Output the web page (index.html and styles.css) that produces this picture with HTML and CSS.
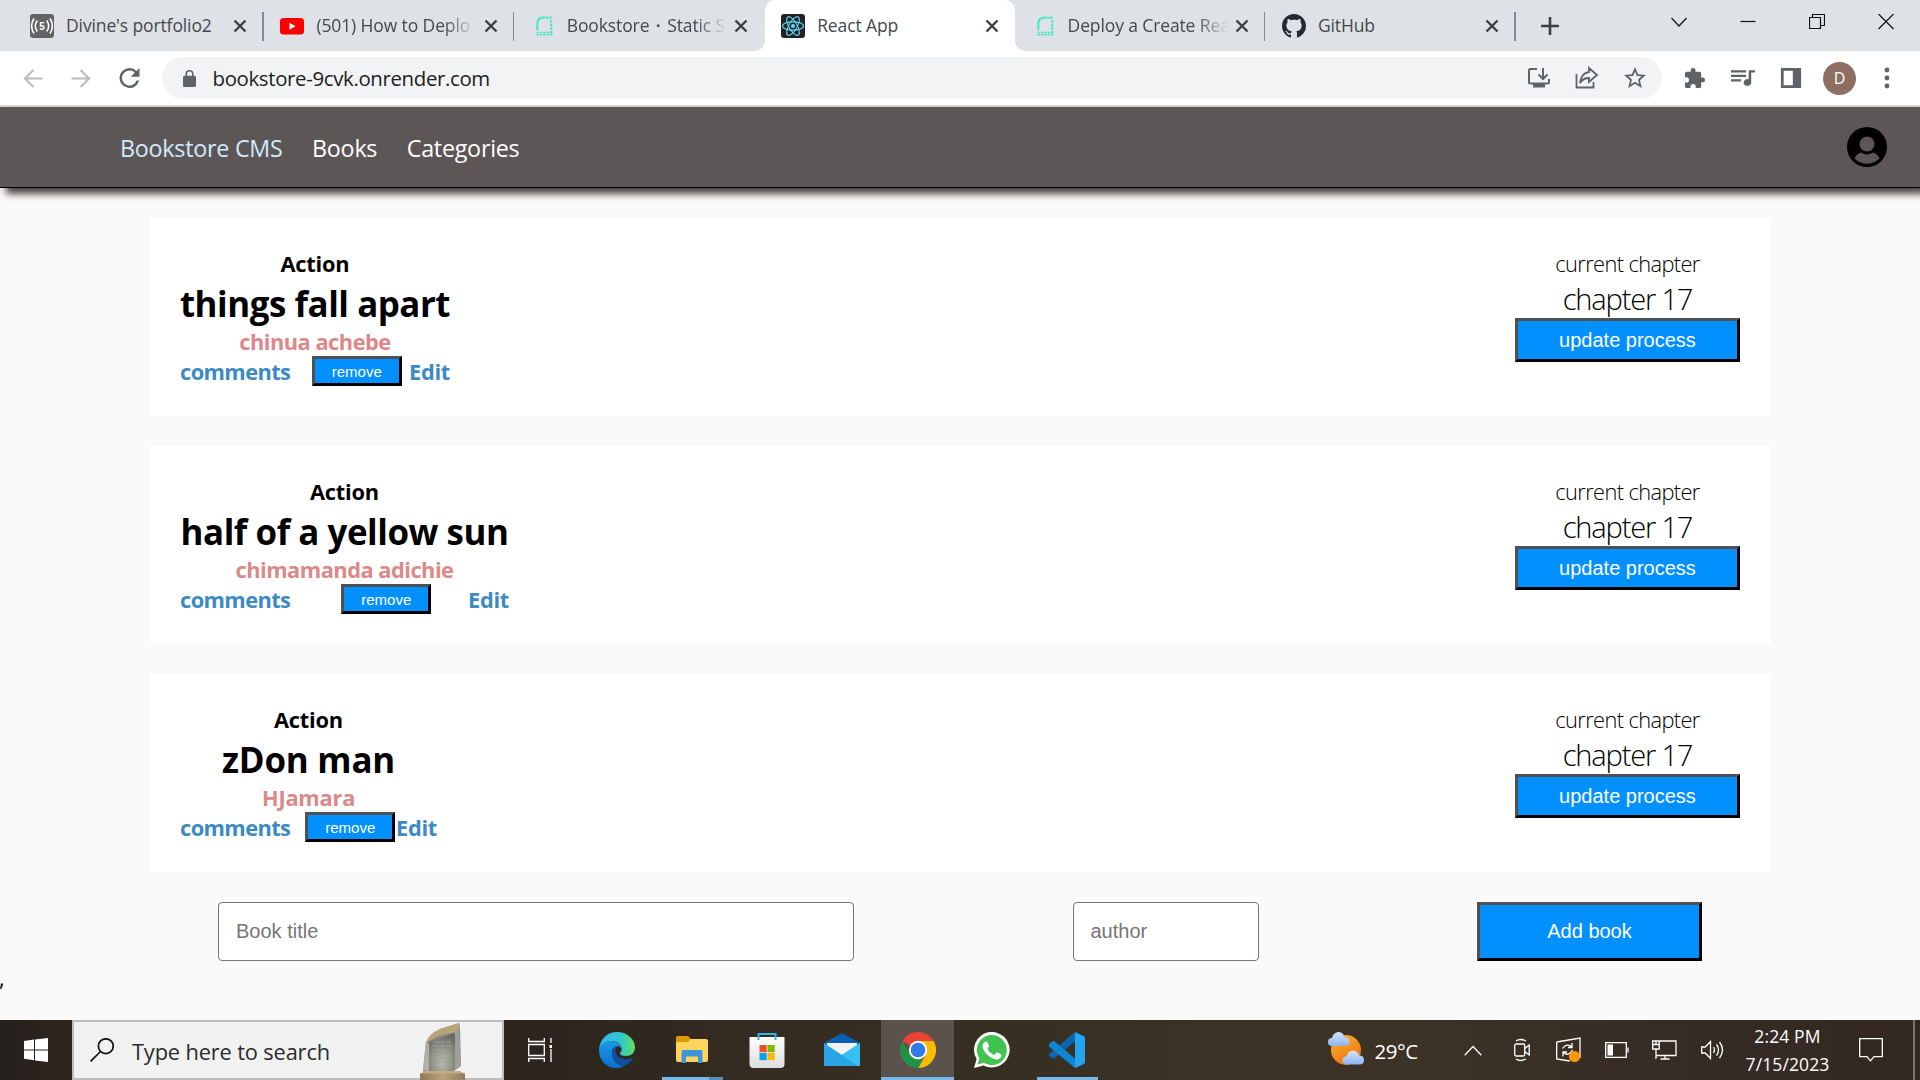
FILE: index.html
```
<!DOCTYPE html>
<html lang="en">
<head>
<meta charset="utf-8">
<title>React App</title>
<link rel="stylesheet" href="styles.css">
</head>
<body>
<svg class="defs" width="0" height="0" aria-hidden="true">
  <symbol id="x" viewBox="0 0 14 14"><path d="M1.500 1.500l11 11M12.500 1.500l-11 11" stroke="#3c4043" stroke-width="2.400" fill="none"/></symbol>
  <symbol id="render" viewBox="0 0 20 24"><path d="M2 17V9Q2 2 9 2h2" fill="none" stroke="#4be8bd" stroke-width="2.600"/><path d="M12 2h8" stroke="#4be8bd" stroke-width="2.600" stroke-dasharray="3 1"/><path d="M18.600 5v17" stroke="#4be8bd" stroke-width="2.600" stroke-dasharray="3 1.300"/><path d="M.8 19.800H20M.8 22.400H20" stroke="#4be8bd" stroke-width="1.900" stroke-dasharray="3 1.100"/></symbol>
</svg>

<div class="tabs">
  <div class="tab">
    <svg class="fav" viewBox="0 0 24 24"><rect width="24" height="24" rx="3" fill="#636363"/><g fill="none" stroke="#fff" stroke-width="1.600"><path d="M4 4.500Q-.8 12 4 19.500M7.300 6.500Q3.300 12 7.300 17.500M20 4.500Q24.800 12 20 19.500M16.700 6.500Q20.700 12 16.700 17.500"/></g><text x="12" y="15.500" text-anchor="middle" class="five">5</text></svg>
    <span class="tab-title">Divine's portfolio2</span><svg class="close"><use href="#x"/></svg>
  </div>
  <div class="tab">
    <svg class="fav" viewBox="0 0 24 24"><rect y="4" width="24" height="16.500" rx="3.500" fill="#f00"/><path d="M9.500 8.700v7l6-3.500z" fill="#fff"/></svg>
    <span class="tab-title fade">(501) How to Deplo</span><svg class="close"><use href="#x"/></svg>
  </div>
  <div class="tab no-sep">
    <svg class="fav render"><use href="#render"/></svg>
    <span class="tab-title fade">Bookstore・Static S</span><svg class="close"><use href="#x"/></svg>
  </div>
  <div class="tab active">
    <svg class="fav" viewBox="0 0 24 24"><rect width="24" height="24" rx="3" fill="#222"/><g fill="none" stroke="#61dafb" stroke-width="1.100"><ellipse cx="12" cy="12" rx="10.500" ry="4.100"/><ellipse cx="12" cy="12" rx="10.500" ry="4.100" transform="rotate(60 12 12)"/><ellipse cx="12" cy="12" rx="10.500" ry="4.100" transform="rotate(120 12 12)"/></g><circle cx="12" cy="12" r="2.100" fill="#61dafb"/></svg>
    <span class="tab-title">React App</span><svg class="close"><use href="#x"/></svg>
  </div>
  <div class="tab">
    <svg class="fav render"><use href="#render"/></svg>
    <span class="tab-title fade">Deploy a Create Rea</span><svg class="close"><use href="#x"/></svg>
  </div>
  <div class="tab">
    <svg class="fav" viewBox="0 0 16 16"><path fill="#24292f" d="M8 0C3.580 0 0 3.580 0 8c0 3.540 2.290 6.530 5.470 7.590.4.070.55-.17.55-.38 0-.19-.01-.82-.01-1.490-2.010.37-2.530-.49-2.690-.94-.09-.23-.48-.94-.82-1.130-.28-.15-.68-.52-.01-.53.63-.01 1.080.58 1.230.82.72 1.210 1.870.87 2.330.66.07-.52.28-.87.51-1.070-1.780-.2-3.640-.89-3.640-3.950 0-.87.31-1.590.82-2.150-.08-.2-.36-1.020.08-2.120 0 0 .67-.21 2.200.82.64-.18 1.320-.27 2-.27s1.360.09 2 .27c1.530-1.040 2.200-.82 2.200-.82.44 1.100.16 1.920.08 2.120.51.56.82 1.270.82 2.150 0 3.070-1.870 3.750-3.650 3.950.29.25.54.73.54 1.480 0 1.070-.01 1.930-.01 2.200 0 .21.15.46.55.38A8.010 8.010 0 0 0 16 8c0-4.420-3.580-8-8-8z"/></svg>
    <span class="tab-title">GitHub</span><svg class="close"><use href="#x"/></svg>
  </div>
  <svg class="new-tab" viewBox="0 0 18 18"><path d="M9 0v18M0 9h18" stroke="#3c4043" stroke-width="2.600"/></svg>
  <div class="window-controls">
    <svg viewBox="0 0 16 16"><path d="M.5 4l7.500 8 7.500-8"/></svg>
    <svg viewBox="0 0 16 16"><path d="M.5 7.500h15"/></svg>
    <svg viewBox="0 0 16 16"><path d="M.5 3.500h11v11h-11zM3.500 3.500v-3h12v11h-4"/></svg>
    <svg viewBox="0 0 16 16"><path d="M.5 0l15 15M15.500 0l-15 15"/></svg>
  </div>
</div>

<div class="toolbar">
  <svg class="back" viewBox="0 0 20 20"><path d="M20 10H2M10.500 1L1.500 10l9 9" fill="none" stroke="#b9bbbe" stroke-width="2.200"/></svg>
  <svg class="forward" viewBox="0 0 20 20"><path d="M0 10h18M9.500 1l9 9-9 9" fill="none" stroke="#b9bbbe" stroke-width="2.200"/></svg>
  <svg class="reload" viewBox="4 4 16 16"><path fill="#5f6368" d="M17.650 6.350A7.960 7.960 0 0 0 12 4a8 8 0 1 0 7.730 10h-2.080A6 6 0 1 1 12 6c1.660 0 3.140.69 4.220 1.780L13 11h7V4z"/></svg>
  <div class="omnibox">
    <svg class="lock" viewBox="4 1 16 21"><path fill="#5f6368" d="M18 8h-1V6A5 5 0 0 0 7 6v2H6a2 2 0 0 0-2 2v10c0 1.100.9 2 2 2h12a2 2 0 0 0 2-2V10a2 2 0 0 0-2-2zM8.900 6a3.100 3.100 0 0 1 6.200 0v2H8.900z"/></svg>
    <span class="url">bookstore-9cvk.onrender.com</span>
    <svg class="omni-icon" viewBox="0 0 24 24"><path d="M10 3H3.500Q2 3 2 4.500V16q0 1.500 1.500 1.500h17Q22 17.500 22 16v-3M16 2v11M11.500 8.500L16 13l4.500-4.500" fill="none" stroke="#5f6368" stroke-width="2"/><path d="M6 18h12v3.500H6z" fill="#5f6368"/></svg>
    <svg class="omni-icon" viewBox="0 0 24 24"><path d="M1.500 8v13.500h17V16M14 6V2l8 7-8 7v-4Q8 12 5 17 6 7 14 6z" fill="none" stroke="#5f6368" stroke-width="1.800"/></svg>
    <svg class="omni-icon star" viewBox="2 2 20 20"><path fill="#5f6368" d="M22 9.240l-7.190-.62L12 2 9.190 8.630 2 9.240l5.460 4.730L5.820 21 12 17.270 18.180 21l-1.630-7.030L22 9.240zM12 15.400l-3.760 2.270 1-4.280-3.320-2.880 4.380-.38L12 6.100l1.710 4.040 4.380.38-3.320 2.880 1 4.280L12 15.400z"/></svg>
  </div>
  <div class="actions">
    <svg viewBox="1 0 23 23"><path fill="#5f6368" d="M20.500 11H19V7a2 2 0 0 0-2-2h-4V3.500a2.500 2.500 0 0 0-5 0V5H4a2 2 0 0 0-2 2v3.800h1.500a2.700 2.700 0 0 1 0 5.400H2V20c0 1.100.9 2 2 2h3.800v-1.500a2.700 2.700 0 0 1 5.400 0V22H17a2 2 0 0 0 2-2v-4h1.500a2.500 2.500 0 0 0 0-5z"/></svg>
    <svg class="queue" viewBox="3 5 19 16" preserveAspectRatio="none"><path fill="#5f6368" d="M15 6H3v2h12V6zm0 4H3v2h12v-2zM3 16h8v-2H3v2zM17 6v8.180A3 3 0 1 0 19 17V8h3V6h-5z"/></svg>
    <svg viewBox="0 0 24 24"><path fill="#5f6368" fill-rule="evenodd" d="M1 1h22v22H1zM4 4v16h10V4z"/></svg>
    <span class="avatar">D</span>
    <svg class="dots" viewBox="0 0 6 22"><g fill="#5f6368"><circle cx="3" cy="3" r="2.400"/><circle cx="3" cy="11" r="2.400"/><circle cx="3" cy="19" r="2.400"/></g></svg>
  </div>
</div>

<header class="site-header">
  <nav><a class="brand">Bookstore CMS</a><a>Books</a><a>Categories</a></nav>
  <svg class="user" viewBox="0 0 40 40"><defs><clipPath id="uc"><circle cx="20" cy="20" r="16.800"/></clipPath></defs><circle cx="20" cy="20" r="20"/><circle cx="20" cy="17" r="7.500" fill="#5c5656"/><path clip-path="url(#uc)" d="M6 35Q8 27 14 25.500 20 29.500 26 25.500 32 27 34 35V40H6z" fill="#5c5656"/></svg>
</header>

<main>
  <section class="card">
    <div class="info w-things">
      <span class="genre">Action</span><h2>things fall apart</h2><span class="author">chinua achebe</span>
      <div class="links"><a class="c">comments</a><button class="remove">remove</button><a class="e">Edit</a></div>
    </div>
    <div class="progress"><span class="current">current chapter</span><span class="chapter">chapter 17</span><button class="update">update process</button></div>
  </section>
  <section class="card">
    <div class="info w-half">
      <span class="genre">Action</span><h2>half of a yellow sun</h2><span class="author">chimamanda adichie</span>
      <div class="links"><a class="c">comments</a><button class="remove">remove</button><a class="e">Edit</a></div>
    </div>
    <div class="progress"><span class="current">current chapter</span><span class="chapter">chapter 17</span><button class="update">update process</button></div>
  </section>
  <section class="card">
    <div class="info w-don">
      <span class="genre">Action</span><h2>zDon man</h2><span class="author">HJamara</span>
      <div class="links"><a class="c">comments</a><button class="remove">remove</button><a class="e">Edit</a></div>
    </div>
    <div class="progress"><span class="current">current chapter</span><span class="chapter">chapter 17</span><button class="update">update process</button></div>
  </section>
  <form>
    <input class="title-in" placeholder="Book title"><input class="author-in" placeholder="author"><button type="button" class="add">Add book</button>
  </form>
  <div class="stray">,</div>
</main>

<footer class="taskbar">
  <div class="start"><svg viewBox="0 0 24 24"><path fill="#fff" d="M0 3L10 1.500v9.900H0zM11 1.400L24 0v11.400H11zM0 12.400h10v9.900L0 20.800zM11 12.400h13V24l-13-1.600z"/></svg></div>
  <div class="search">
    <svg class="mag" viewBox="0 0 24 24"><circle cx="15.800" cy="8.200" r="7.400" fill="none" stroke="#111" stroke-width="1.700"/><path d="M10.500 13.500L.6 23.400" stroke="#111" stroke-width="1.700"/></svg>
    <span>Type here to search</span>
    <svg class="stone" viewBox="0 0 46 58">
      <defs><radialGradient id="sg" cx=".5" cy=".75" r=".75"><stop offset="0" stop-color="#b9bdb0"/><stop offset="1" stop-color="#686b62"/></radialGradient><linearGradient id="sb"><stop offset="0" stop-color="#8d7b5a"/><stop offset=".5" stop-color="#b6a27c"/><stop offset="1" stop-color="#8f7e5e"/></linearGradient></defs>
      <path d="M6 20L20 7 39 1l1 4 1 39-7 5-25 3-6-3z" fill="#8c8b85"/><path d="M9 20L34 11l1 3v32l-8 4H9z" fill="url(#sg)"/><path d="M6 21Q8 12 20 7L39 1l1 6-4 3-9 2-9 2-9 5z" fill="#b9a37a"/><path d="M35 10l4-5 2 39-6 4z" fill="#a09e99"/><path d="M3 47l3-27 3 2v29z" fill="#b0aea7"/>
      <path d="M13 20h18M12 24h20M12 28h18M12 32h20M12 36h19M13 40h17" stroke="#9da194" stroke-width="1" stroke-dasharray="7 1 4 2"/><path d="M4 49h36l5 3H0z" fill="#c6aa7d"/><path d="M0 51.500h45V58H0z" fill="url(#sb)"/>
    </svg>
  </div>
  <div class="apps">
    <div class="app tv"><svg viewBox="0 0 24 24" fill="none" stroke="#fff" stroke-width="1.300"><path d="M.7 0v3.500h15.600V0M.7 6.500h15.600v11H.7zM.7 24v-3.500h15.600V24M23 0v5M23 11v13"/><path d="M21.500 7h3v3h-3z" fill="#fff" stroke="none"/></svg></div>
    <div class="app"><svg viewBox="0 0 36 36"><defs><linearGradient id="e1"><stop offset="0" stop-color="#35b8f0"/><stop offset=".6" stop-color="#2dc7d0"/><stop offset="1" stop-color="#5fe35a"/></linearGradient><linearGradient id="e2" x2="0" y2="1"><stop offset="0" stop-color="#1a9be6"/><stop offset="1" stop-color="#0a6fd0"/></linearGradient></defs><path d="M0 18C1 7 8 0 18 0c11 0 18 8 18 15 0 6-4 9-9 9-4 0-6-1-6-2.500 0-1 2-2 1.500-5C22 11 17 9 12 9 6 9 2 13 0 18z" fill="url(#e1)"/><path d="M0 18c1-5 5-9 11-9 5 0 10 2 11.500 7-5-4-9.500 0-9.500 5 0 8 7 14 12 13-3 1.500-5 2-8 2C7 36 0 28 0 18z" fill="url(#e2)"/><path d="M17 14.500c-3 1-4 4-4 6.500 0 8 7 14 12 13 4-1.500 7-4 8.500-7 .3-.8-.4-1.200-1-.9C26 29 14 27 17 14.500z" fill="#0f4f9e"/></svg></div>
    <div class="app folder"><svg viewBox="0 0 32 27"><path d="M0 2Q0 0 2 0h10l3 3v4H0z" fill="#dd9a05"/><path d="M0 6h12l3-3h15q2 0 2 2v19q0 2-2 2H2q-2 0-2-2z" fill="#ffd45e"/><path d="M5.500 27V16q0-2 2-2h17q2 0 2 2v11H22v-6.500H10V27z" fill="#3c96dc"/></svg><i></i></div>
    <div class="app"><svg viewBox="0 0 36 36"><defs><linearGradient id="st" x2="0" y2="1"><stop offset="0" stop-color="#fff"/><stop offset="1" stop-color="#ddd"/></linearGradient></defs><path d="M.5 5h35v27q0 4-4 4h-27q-4 0-4-4z" fill="url(#st)"/><path d="M9.500 8V2h17v6" fill="none" stroke="#2fb3f0" stroke-width="2"/><path fill="#f25022" d="M10.500 13h7.200v7.200h-7.200z"/><path fill="#7fba00" d="M18.500 13h7.200v7.200h-7.200z"/><path fill="#00a4ef" d="M10.500 21h7.200v7.200h-7.200z"/><path fill="#ffb900" d="M18.500 21h7.200v7.200h-7.200z"/></svg></div>
    <div class="app"><svg viewBox="0 0 36 36"><path d="M0 11L18 1l18 10v4H0z" fill="#0a5fb4"/><path d="M3 11h30v4L18 24 3 15z" fill="#f3f3f3"/><path d="M0 11l18 12L36 11v23H0z" fill="#2aa5e8"/><path d="M36 11L18 23l16 11h2z" fill="#36c1f5"/></svg></div>
    <div class="app chrome on"><svg viewBox="0 0 36 36"><path d="M18 18L2.400 9A18 18 0 0 1 33.600 9z" fill="#ea4335"/><path d="M18 9h15.600A18 18 0 0 1 18 36l7.800-13.500z" fill="#fbbc04"/><path d="M2.400 9l7.800 13.500L18 27h5.200L18 36A18 18 0 0 1 2.400 9z" fill="#1f9345"/><circle cx="18" cy="18" r="9.200" fill="#fff"/><circle cx="18" cy="18" r="7.300" fill="#3279ea"/></svg></div>
    <div class="app"><svg viewBox="0 0 36 36"><path d="M0 36l2.600-9A17.800 17.800 0 1 1 9.500 33.500z" fill="#fff"/><path d="M3.600 32.400l1.800-6A15 15 0 1 1 10 30.800z" fill="#40c351"/><path d="M12.500 9.500c-1.500-.3-4 1.500-4 4.500 0 5 7 12.500 13.500 13.500 3 .3 5.500-2 5.500-4.500 0-.7-3.800-2.700-4.600-2.500-.9.300-1.600 2.400-2.400 2.400-2 0-7.200-5-7-6.200.1-.7 1.700-1.600 1.600-2.700-.1-.8-1.500-4.300-2.600-4.500z" fill="#fff"/></svg></div>
    <div class="app run"><svg viewBox="0 0 36 36"><path d="M26 0L34.500 4Q36 5 36 6v24q0 1.500-1.500 2.200L26 36z" fill="#25a5f0"/><path d="M26 0v9.500L4.500 27 0 24v-2z" fill="#0a66b0"/><path d="M3.500 9L0 12v2.500L26 36V26.500L5 9z" fill="#0c86d3"/></svg></div>
  </div>
  <div class="tray">
    <svg class="weather" viewBox="0 0 36 34"><defs><linearGradient id="w" x2=".5" y2="1"><stop offset="0" stop-color="#f9b52a"/><stop offset="1" stop-color="#f07413"/></linearGradient><linearGradient id="cl" x2="0" y2="1"><stop offset="0" stop-color="#d5e6fd"/><stop offset="1" stop-color="#8fb2ee"/></linearGradient></defs><circle cx="18" cy="18" r="15" fill="url(#w)"/><path id="cloud" d="M4 14a4 4 0 0 1 0-8q1-5 6-6 5 0 6.500 5 5 0 5 4.500T17 14z" fill="url(#cl)"/><use href="#cloud" x="14.500" y="18.500"/></svg>
    <span class="temp">29°C</span>
    <svg class="caret" viewBox="0 0 18 11"><path d="M.7 10.300L9 1.500l8.300 8.800"/></svg>
    <svg class="cam" viewBox="0 0 16 24"><rect x=".7" y="6" width="10" height="12" rx="1.500"/><path d="M10.700 10.500l4.500-3.500v10l-4.500-3.500M2 3q4-3 10 0M2 21q4 3 10 0"/></svg>
    <svg class="sync" viewBox="0 0 26 26"><path d="M.7 5L24 1v20M.7 5v17l13 2M6.500 11.500q4-6 9.500-1.500M16 6v4.500h-4M16.500 13q-4 7-9 2.500M7 19.500V15h4"/><circle cx="18.500" cy="19.500" r="5.600" fill="#ff9800" stroke="none"/></svg>
    <svg class="bat" viewBox="0 0 24 16"><path d="M.7.700h20.600v14.600H.7zM23 5.500v5"/><path d="M2.500 2.500h5.500v11H2.500z" fill="#fff" stroke="none"/></svg>
    <svg class="net" viewBox="0 0 25 20"><path d="M7.500 1h16.500v14.500H4M13 15.500V19M8.500 19h9M.7 1h6.500v8H.7zM.7 4.500h6.500M4 1v3.500M4 9v10"/></svg>
    <svg class="vol" viewBox="0 0 24 20"><path d="M.7 7h3.500L9.500 1.500v17L4.200 13H.7zM12.500 7q2 3 0 6M15.500 4.500q4 5.500 0 11M18.500 2q6 8 0 16"/></svg>
    <div class="clock"><span>2:24 PM</span><span>7/15/2023</span></div>
    <svg class="note" viewBox="0 0 24 24"><path d="M.7.700h22.600v18H15L11.500 22.800 8 18.700H.7z"/></svg>
    <i class="peek"></i>
  </div>
</footer>
</body>
</html>
```
FILE: styles.css
```
* { box-sizing: border-box; }
html, body { margin: 0; }
body { width: 1920px; height: 1080px; overflow: hidden; display: flex; flex-direction: column; background: #fafafa; font-family: "Open Sans", sans-serif; }
svg { display: block; flex: none; }
.defs { position: absolute; }

/* browser tabs */
.tabs { height: 51px; flex: none; display: flex; align-items: center; padding-left: 13.500px; background: #dee1e6; }
.tab { width: 250.400px; height: 51px; flex: none; display: flex; align-items: center; padding: 0 16.500px; position: relative; }
.tab::after { content: ""; position: absolute; right: 0; top: 12px; height: 29px; width: 1.500px; background: #868a90; }
.tab.no-sep::after, .tab.active::after { display: none; }
.tab.active { background: #fff; border-radius: 10px 10px 0 0; }
.tab.active::before { content: ""; position: absolute; left: -10px; right: -10px; bottom: 0; height: 10px; background: radial-gradient(circle at 0 0, transparent 9.500px, #fff 10px) left / 10px 10px no-repeat, radial-gradient(circle at 100% 0, transparent 9.500px, #fff 10px) right / 10px 10px no-repeat; }
.fav { width: 24px; height: 24px; }
.fav.render { width: 20px; height: 20px; margin: 0 2px 0 3px; }
.fav.render + .tab-title { margin-left: 11px; }
.five { font: bold 10px "Liberation Sans", sans-serif; fill: #fff; }
.tab-title { width: 160px; margin-left: 12px; font-size: 17.500px; letter-spacing: -.12px; line-height: 24px; padding-bottom: 1px; color: #45484c; white-space: nowrap; }
.tab-title.fade { -webkit-mask-image: linear-gradient(90deg, #000 128px, transparent 160px); mask-image: linear-gradient(90deg, #000 128px, transparent 160px); }
.close { width: 14px; height: 14px; margin-left: auto; }
.new-tab { width: 18px; height: 18px; margin-left: 25px; }
.window-controls { margin-left: auto; margin-right: 26.500px; display: flex; gap: 53px; align-self: flex-start; padding-top: 14px; }
.window-controls svg { width: 16px; height: 16px; fill: none; stroke: #111; stroke-width: 1.200; }

/* toolbar */
.toolbar { height: 56px; flex: none; display: flex; align-items: flex-start; background: #fff; border-bottom: 2px solid #d8d7d7; padding-top: 6px; }
.back, .forward { width: 20px; height: 19px; margin-top: 11.500px; }
.back { margin-left: 23px; }
.forward { margin-left: 28px; }
.reload { width: 21px; height: 20px; margin: 11px 0 0 28px; }
.omnibox { width: 1500px; height: 42px; margin-left: 22px; border-radius: 21px; background: #f1f3f4; display: flex; align-items: center; padding: 0 15px 0 20.500px; }
.lock { width: 13px; height: 17px; }
.url { margin-left: 17px; margin-right: auto; font-size: 20.400px; letter-spacing: -.34px; line-height: 28px; padding-bottom: 1px; color: #202124; }
.omni-icon { width: 24px; height: 24px; margin-left: 24px; }
.star { width: 22px; height: 22px; margin: 0 1px 0 25px; }
.actions { display: flex; align-items: center; height: 42px; margin-left: 21px; }
.actions > svg { width: 24px; height: 22px; margin-right: 24px; }
.actions > .queue { height: 18px; }
.avatar { width: 33px; height: 33px; margin-left: -4px; border-radius: 50%; background: #8d6e63; color: #fff; font-size: 16px; line-height: 33px; text-align: center; }
.actions > .dots { width: 6px; margin: 0 0 0 28px; }

/* site header */
.site-header { height: 81px; flex: none; display: flex; align-items: center; justify-content: space-between; padding: 0 33px 0 120px; background: #5c5656; border-bottom: 1px solid #000; box-shadow: 6px 6px 7px #4d4545; position: relative; }
nav { display: flex; gap: 29.500px; font-size: 23.300px; letter-spacing: -.25px; line-height: 32px; color: #fff; padding-top: 2px; }
.brand { color: #d0ebff; }
.user { width: 40px; height: 40px; }

/* book list */
main { flex: 1; padding: 30px 0 0; display: flex; flex-direction: column; }
.card { height: 198px; margin: 0 149.500px 30px; padding: 30px 30.500px; background: #fff; display: flex; justify-content: space-between; flex: none; }
.info { display: flex; flex-direction: column; align-items: center; font-weight: 700; font-size: 21.800px; line-height: 28px; white-space: nowrap; letter-spacing: -.5px; }
.w-things { width: 270px; }
.w-half { width: 329px; }
.w-don { width: 257px; }
.genre, .author, .c, .e, .current, .chapter { padding-top: 2px; }
.genre { letter-spacing: -.21px; }
h2 { margin: 0; padding-top: 4px; font-size: 34.900px; line-height: 44px; letter-spacing: -.46px; }
.w-don h2, .w-don .author { letter-spacing: -.22px; }
.author { color: #dd8888; }
.links { display: flex; justify-content: space-between; width: 100%; color: #3b8ac4; }
.c { width: 110px; letter-spacing: -.58px; }
.e { width: 41px; letter-spacing: -.29px; }
button { font-family: "Liberation Sans", Arial, sans-serif; color: #fff; background: #0290ff; border: 3px solid; border-color: #505050 #000 #000 #505050; padding: 0; border-radius: 0; }
.remove { width: 90px; height: 30px; margin-left: 14.500px; font-size: 15px; }
.progress { display: flex; flex-direction: column; align-items: center; font-weight: 300; color: #000; white-space: nowrap; }
.current { font-size: 21.800px; line-height: 28px; letter-spacing: -.6px; }
.chapter { font-size: 29.100px; line-height: 38px; letter-spacing: -1.200px; }
.update { width: 225px; height: 44px; font-size: 20px; }
form { display: flex; justify-content: space-between; padding: 0 218px; flex: none; }
input { height: 59px; border: 1px solid #767676; border-radius: 4px; background: #fff; padding: 0 17px; font: 20px "Liberation Sans", Arial, sans-serif; }
input::placeholder { color: #757575; }
.title-in { width: 636px; }
.author-in { width: 186px; }
.add { width: 225px; height: 59px; font-size: 20px; }
.stray { font-size: 21.800px; line-height: 30px; margin: 2px 0 0 -1px; }

/* taskbar */
.taskbar { height: 60px; flex: none; display: flex; background: linear-gradient(90deg, #24211d 0, #30251d 70px, #2c251f 530px, #2d271e 600px, #352b21 750px, #3a3224 1200px, #3c3226 1400px, #352b24 1750px, #32281f 1920px); color: #fff; }
.start { width: 72px; padding: 18px 0 0 24px; }
.start svg { width: 24px; height: 24px; }
.search { width: 432px; border: 2px solid #bdbdbd; background: #f1f1f1; display: flex; color: #2b2b2b; padding-left: 16px; }
.mag { width: 24px; height: 24px; margin-top: 16px; }
.search span { margin: 14.500px 0 0 18px; font-size: 21.800px; line-height: 30px; letter-spacing: -.14px; white-space: nowrap; width: 200px; }
.stone { width: 46px; height: 58px; margin-left: 88px; }
.apps { display: flex; }
.app { width: 75px; height: 60px; display: flex; justify-content: center; padding-top: 12px; position: relative; }
.app svg { width: 36px; height: 36px; }
.app.tv { padding-top: 18px; }
.app.tv svg { width: 24px; height: 24px; margin-left: -3px; }
.app.folder svg { width: 32px; height: 27px; margin-top: 4px; }
.folder i { position: absolute; left: 8px; bottom: 0; width: 61px; height: 3px; background: linear-gradient(90deg, #76b9ed 47px, #5a8db5 47px); }
.app.on { background: #5b524b; box-shadow: inset 0 -3px #76b9ed; width: 73px; margin: 0 0 0 2px; }
.app.run { background: linear-gradient(#76b9ed, #76b9ed) 8px bottom / 61px 3px no-repeat; }
.tray { margin-left: auto; display: flex; align-items: center; }
.tray > svg { fill: none; stroke: #fff; stroke-width: 1.300; }
.tray > .weather { width: 36px; height: 34px; stroke: none; margin-bottom: 2px; }
.temp { font-size: 20.400px; letter-spacing: -.4px; margin-left: 11px; width: 46px; padding-top: 2px; }
.caret { width: 18px; height: 11px; margin-left: 43px; }
.cam { width: 16px; height: 24px; margin-left: 32px; }
.sync { width: 26px; height: 26px; margin-left: 26px; }
.bat { width: 24px; height: 16px; margin-left: 23px; }
.net { width: 25px; height: 20px; margin-left: 23px; }
.vol { width: 24px; height: 20px; margin-left: 24px; }
.clock { width: 92px; margin-left: 17px; display: flex; flex-direction: column; align-items: center; font-size: 17.500px; line-height: 28px; letter-spacing: .12px; }
.note { width: 24px; height: 24px; margin-left: 25px; }
.peek { width: 2px; height: 60px; margin: 0 5.500px 0 30px; background: #7b746d; }
```
